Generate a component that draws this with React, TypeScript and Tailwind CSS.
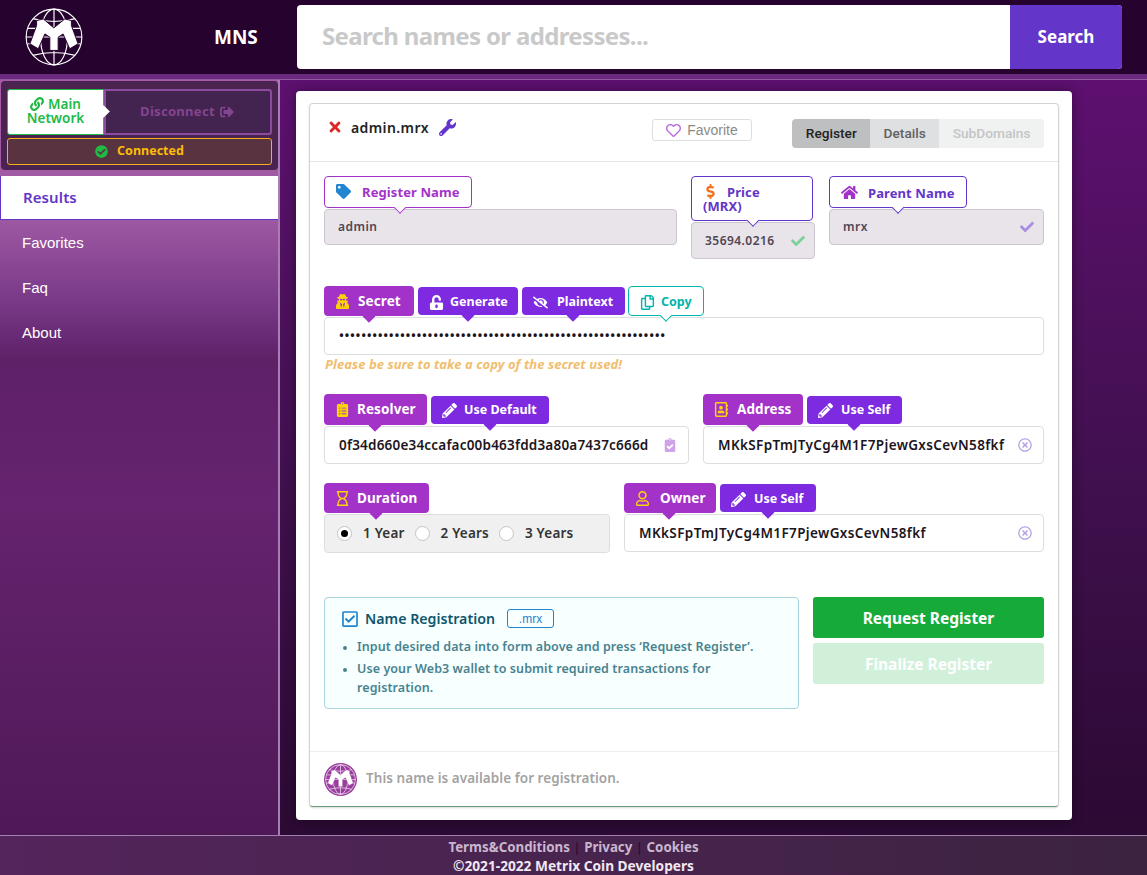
import React from "react";
import {
  FaCheck,
  FaCheckCircle,
  FaClipboardCheck,
  FaClipboardList,
  FaDollarSign,
  FaEyeSlash,
  FaHome,
  FaLink,
  FaPencilAlt,
  FaRegAddressBook,
  FaRegCheckSquare,
  FaRegCopy,
  FaRegHeart,
  FaRegHourglass,
  FaRegTimesCircle,
  FaRegUser,
  FaSignOutAlt,
  FaTag,
  FaTimes,
  FaUnlockAlt,
  FaUserSecret,
  FaWrench,
} from "react-icons/fa";

const ui = "font-['Noto_Sans',sans-serif]";
const arial = "font-['Liberation_Sans',Arial,sans-serif]";

const Logo = ({ size, color, bg }: { size: number; color: string; bg: string }) => (
  <svg width={size} height={size} viewBox="0 0 60 60" fill="none">
    <g stroke={color} strokeWidth="1.2">
      <circle cx="30" cy="30" r="28.8" />
      <ellipse cx="30" cy="30" rx="14" ry="28.8" />
      <path d="M30 1.2V58.8M1.2 30H58.8M8 11Q30 17 52 11M8 49Q30 43 52 49M3 21H14V37H3M57 21H46V37H57" />
    </g>
    <path
      d="M12 13L18.9 11.3L29.8 20.6L41.2 11.3L48 13V18.2L54.9 37L46.3 42.2L39.4 26.8L34.3 30.2V43.9H25.7V30.2L20.6 26.8L13.7 42.2L5.1 37L12 18.2Z"
      fill={color}
      stroke={bg}
      strokeWidth="1"
    />
  </svg>
);

const Caret = ({ className, left }: { className: string; left: string }) => (
  <span className={`absolute bottom-[-5px] h-[9px] w-[9px] -translate-x-1/2 rotate-45 ${left} ${className}`} />
);

type TagProps = {
  icon: React.ReactNode;
  text: string;
  width: string;
  caret: string;
  gap: string;
  tone?: "magenta" | "violet" | "teal";
  height?: string;
};

// solid pointing labels above the inputs
const Tag = ({ icon, text, width, caret, gap, tone = "magenta", height = "h-[28px]" }: TagProps) => {
  const toneClass =
    tone === "magenta"
      ? "bg-[#a333c8] text-white text-[13.5px] tracking-[0.1px]"
      : tone === "violet"
        ? "bg-[#7d2ae0] text-white text-[12.5px] pt-[2px]"
        : "bg-white border border-[#00b5ad] text-[#00b5ad] text-[12.5px] pt-[2px]";
  const caretClass =
    tone === "magenta"
      ? "bg-[#a333c8]"
      : tone === "violet"
        ? "bg-[#7d2ae0]"
        : "bg-white border-r border-b border-[#00b5ad]";
  return (
    <div className={`relative z-10 flex items-center rounded-[4px] pl-[11px] font-bold ${gap} ${height} ${width} ${toneClass}`}>
      <span className="flex w-[15px] justify-center text-[15px]">{icon}</span>
      <span>{text}</span>
      <Caret className={caretClass} left={caret} />
    </div>
  );
};

// white outlined labels on the first row
const OutlineTag = ({
  icon,
  text,
  width,
  height,
  color,
  caret,
  border,
}: {
  icon: React.ReactNode;
  text: React.ReactNode;
  width: string;
  height: string;
  color: string;
  caret: string;
  border: string;
}) => (
  <div
    className={`relative z-10 rounded-[4px] border bg-white pl-[11px] pr-2 pt-[7px] text-[13px] font-bold leading-[14px] tracking-[0.1px] ${height} ${width} ${color} ${border}`}
  >
    {icon}
    {text}
    <Caret className={`border-r border-b bg-white ${border}`} left={caret} />
  </div>
);

const ReadOnly = ({ value, check, height = "h-[36px]" }: { value: string; check?: string; height?: string }) => (
  <div
    className={`flex items-center justify-between rounded-[4px] border border-[#cbc6cf] bg-[#e9e3ea] pl-[13px] pr-[9px] text-[12px] font-semibold tracking-[0.45px] text-[#4f4753] ${height}`}
  >
    <span>{value}</span>
    {check && <FaCheck className={`text-[14px] ${check}`} />}
  </div>
);

const Field = ({ children, className }: { children: React.ReactNode; className?: string }) => (
  <div
    className={`flex h-[38px] items-center justify-between rounded-[4px] border border-[#dededf] bg-white pl-[14px] pr-[11px] text-[13.5px] font-semibold text-[#1c1520] ${className ?? ""}`}
  >
    {children}
  </div>
);

const Radio = ({ label, on }: { label: string; on?: boolean }) => (
  <div className="flex items-center gap-[11px]">
    <span className="flex h-[15px] w-[15px] items-center justify-center rounded-full border border-[#c4c4c4] bg-white">
      {on && <span className="h-[7px] w-[7px] rounded-full bg-black" />}
    </span>
    <span>{label}</span>
  </div>
);

const navItems = ["Favorites", "Faq", "About"];

export default function App() {
  return (
    <div className={`flex h-[875px] w-[1147px] flex-col overflow-hidden bg-[#26022e] ${ui}`}>
      <header className="flex h-[74px] shrink-0 items-center bg-[#26022e]">
        <div className="ml-[25px] w-[58px]">
          <Logo size={58} color="#ffffff" bg="#26022e" />
        </div>
        <div className="ml-[131px] w-[83px] text-[19px] font-bold text-white">MNS</div>
        <div className="flex h-[64px] w-[825px] overflow-hidden rounded-[4px] bg-white">
          <div className="flex flex-1 items-center pb-[2px] pl-[25px] text-[24px] font-bold tracking-[-0.65px] text-[#c9c9c9]">
            Search names or addresses...
          </div>
          <div className="flex w-[112px] items-center justify-center bg-[#6435c9] text-[17px] font-bold text-white">
            Search
          </div>
        </div>
      </header>
      <div className="h-[5px] shrink-0 bg-[#6b2a80]" />

      <div className="flex min-h-0 flex-1 border-t border-[#8f5aa0]">
        <aside className="flex w-[280px] shrink-0 flex-col border-r-2 border-[#a87db5] [background-image:linear-gradient(180deg,#a65aa8_0%,#a05aa4_18%,#7a3a88_29%,#5e2168_37%,#66236f_56%,#4e1956_100%)]">
          <div className="mb-[6px] ml-[1px] mt-[1px] rounded-[4px] bg-[#4a2350] px-[6px] pt-[8px] pb-[5px]">
            <div className="flex h-[46px]">
              <div className="relative flex w-[97px] flex-col items-center justify-center rounded-l-[3px] border border-[#21ba45] bg-white pb-[2px] text-[13.5px] font-semibold leading-[14px] text-[#21ba45]">
                <span className="flex items-center gap-[4px]">
                  <FaLink className="text-[14px]" />
                  Main
                </span>
                <span>Network</span>
                <span className="absolute right-[-5px] top-[17px] h-[9px] w-[9px] rotate-45 bg-white" />
              </div>
              <div className="flex flex-1 items-center justify-center gap-[5px] rounded-r-[3px] border-2 border-[#8a4c9c] bg-[#43234f] pr-[2px] text-[13px] font-bold tracking-[0.3px] text-[#84458f]">
                Disconnect
                <FaSignOutAlt className="text-[14px]" />
              </div>
            </div>
            <div className="mt-[3px] flex h-[27px] items-center justify-center gap-[9px] rounded-[3px] border border-[#f2b21c] bg-[#5a3340] text-[12.5px] font-bold text-[#fbbd08]">
              <FaCheckCircle className="text-[13px] text-[#21ba45]" />
              Connected
            </div>
          </div>
          <div className="mb-[1px] flex h-[44px] items-center border-b border-l border-[#6435c9] bg-white pb-[1px] pl-[22px] text-[15px] font-semibold tracking-[0.1px] text-[#6435c9]">
            Results
          </div>
          {navItems.map((item) => (
            <div key={item} className={`flex h-[45px] items-center pl-[22px] text-[15px] text-white ${arial}`}>
              {item}
            </div>
          ))}
        </aside>

        <main className="min-w-0 flex-1 bg-gradient-to-b from-[#5e1070] via-[#421050] to-[#2b0a33] pl-[16px] pr-[75px] pt-[11px]">
          <div className="h-[729px] rounded-[4px] bg-white px-[13px] pt-[12px] shadow-[0_0_12px_rgba(0,0,0,0.4)]">
            <div className="flex h-[704px] flex-col rounded-[4px] border border-[#d4d4d5] border-b-[#6a9c78] shadow-[0_1px_2px_rgba(0,0,0,0.15)]">
              <div className="flex h-[58px] shrink-0 border-b border-[#e4e4e5] pl-[17px] pr-[14px]">
                <div className="flex h-[46px] w-[325px] items-center">
                  <FaTimes className="text-[16px] text-[#db2828]" />
                  <span className="ml-[8px] text-[14px] font-semibold tracking-[0.4px] text-[#222]">admin.mrx</span>
                  <FaWrench className="ml-[10px] text-[17px] text-[#6435c9]" />
                </div>
                <div
                  className={`mt-[15px] flex h-[22px] w-[101px] items-center justify-center gap-[6px] rounded-[3px] border border-[#dedede] text-[14px] text-[#8a8a8a] ${arial}`}
                >
                  <FaRegHeart className="text-[15px] text-[#b968dc]" />
                  Favorite
                </div>
                <div className="ml-[40px] mt-[15px] flex h-[29px] overflow-hidden rounded-[4px] font-['Roboto',sans-serif] text-[13.7px] font-medium">
                  <div className="flex w-[78px] items-center justify-center bg-[#bebfc0] text-[#222]">Register</div>
                  <div className="flex w-[69px] items-center justify-center bg-[#dfe0e1] text-[#5f6062]">Details</div>
                  <div className="flex w-[105px] items-center justify-center bg-[#f0f1f1] text-[#c4c5c6]">SubDomains</div>
                </div>
              </div>

              <div className="flex-1 px-[14px] pt-[14px]">
                <div className="flex h-[110px] gap-[14px]">
                  <div className="w-[353px]">
                    <OutlineTag
                      width="w-[148px]"
                      height="h-[32px]"
                      color="text-[#a333c8]"
                      border="border-[#a333c8]"
                      caret="left-[75px]"
                      icon={<FaTag className="mr-[11px] inline text-[15px] text-[#2185d0] align-[-2px]" />}
                      text="Register Name"
                    />
                    <div className="mt-[1px]">
                      <ReadOnly value="admin" />
                    </div>
                  </div>
                  <div className="w-[124px]">
                    <OutlineTag
                      width="w-[122px]"
                      height="h-[45px]"
                      color="text-[#6435c9]"
                      border="border-[#6435c9]"
                      caret="left-[61px]"
                      icon={<FaDollarSign className="mr-[9px] inline text-[15px] text-[#f2711c] align-[-2px]" />}
                      text={
                        <>
                          Price
                          <br />
                          (MRX)
                        </>
                      }
                    />
                    <div className="mt-[1px]">
                      <ReadOnly value="35694.0216" check="text-[#7fd19a]" height="h-[37px]" />
                    </div>
                  </div>
                  <div className="flex-1">
                    <OutlineTag
                      width="w-[138px]"
                      height="h-[32px]"
                      color="text-[#6435c9]"
                      border="border-[#6435c9]"
                      caret="left-[68px]"
                      icon={<FaHome className="mr-[10px] inline text-[17px] text-[#a333c8] align-[-3px]" />}
                      text="Parent Name"
                    />
                    <div className="mt-[1px]">
                      <ReadOnly value="mrx" check="text-[#a98fdf]" />
                    </div>
                  </div>
                </div>

                <div className="flex items-center">
                  <Tag width="w-[90px]" height="h-[30px]" gap="gap-[8px]" caret="left-[45px]" icon={<FaUserSecret className="text-[#fbd408]" />} text="Secret" />
                  <div className="ml-[4px]">
                    <Tag width="w-[100px]" gap="gap-[6px]" caret="left-[50px]" tone="violet" icon={<FaUnlockAlt />} text="Generate" />
                  </div>
                  <div className="ml-[4px]">
                    <Tag width="w-[103px]" gap="gap-[9px]" caret="left-[51px]" tone="violet" icon={<FaEyeSlash />} text="Plaintext" />
                  </div>
                  <div className="ml-[3px]">
                    <Tag width="w-[76px]" height="h-[30px]" gap="gap-[6px]" caret="left-[37px]" tone="teal" icon={<FaRegCopy />} text="Copy" />
                  </div>
                </div>
                <Field className="mt-[1px]">
                  <span className="text-[13px] tracking-[0.65px]">{"•".repeat(59)}</span>
                </Field>
                <div className="h-[18px] pl-[1px] text-[13px] font-bold italic leading-[18px] tracking-[0.05px] text-[#f0be6e]">
                  Please be sure to take a copy of the secret used!
                </div>

                <div className="mt-[21px] flex gap-[14px]">
                  <div className="w-[365px]">
                    <div className="flex items-center gap-[4px]">
                      <Tag width="w-[103px]" height="h-[31px]" gap="gap-[7px]" caret="left-[51px]" icon={<FaClipboardList className="text-[#fbd408]" />} text="Resolver" />
                      <Tag width="w-[118px]" gap="gap-[7px]" caret="left-[59px]" tone="violet" icon={<FaPencilAlt />} text="Use Default" />
                    </div>
                    <Field className="mt-[1px] tracking-[0.2px]">
                      <span>0f34d660e34ccafac00b463fdd3a80a7437c666d</span>
                      <FaClipboardCheck className="text-[14px] text-[#d0a3e8]" />
                    </Field>
                  </div>
                  <div className="flex-1">
                    <div className="flex items-center gap-[4px]">
                      <Tag width="w-[100px]" height="h-[31px]" gap="gap-[8px]" caret="left-[50px]" icon={<FaRegAddressBook className="text-[#fbd408]" />} text="Address" />
                      <Tag width="w-[95px]" gap="gap-[8px]" caret="left-[47px]" tone="violet" icon={<FaPencilAlt />} text="Use Self" />
                    </div>
                    <Field className="mt-[1px] tracking-[0.36px]">
                      <span>MKkSFpTmJTyCg4M1F7PjewGxsCevN58fkf</span>
                      <FaRegTimesCircle className="text-[14px] text-[#b3a2e6]" />
                    </Field>
                  </div>
                </div>

                <div className="mt-[19px] flex gap-[14px]">
                  <div className="w-[286px]">
                    <Tag width="w-[105px]" height="h-[30px]" gap="gap-[7px]" caret="left-[52px]" icon={<FaRegHourglass className="text-[#fbd408]" />} text="Duration" />
                    <div className="mt-[1px] flex h-[39px] items-center gap-[10px] rounded-[4px] border border-[#dededf] bg-[#f0f0f0] pl-[12px] text-[13.5px] font-semibold tracking-[0.2px] text-[#333]">
                      <Radio label="1 Year" on />
                      <Radio label="2 Years" />
                      <Radio label="3 Years" />
                    </div>
                  </div>
                  <div className="flex-1">
                    <div className="flex items-center gap-[4px]">
                      <Tag width="w-[92px]" height="h-[30px]" gap="gap-[10px]" caret="left-[45px]" icon={<FaRegUser className="text-[#fbd408]" />} text="Owner" />
                      <Tag width="w-[96px]" gap="gap-[8px]" caret="left-[48px]" tone="violet" icon={<FaPencilAlt />} text="Use Self" />
                    </div>
                    <Field className="mt-[1px] tracking-[0.38px]">
                      <span>MKkSFpTmJTyCg4M1F7PjewGxsCevN58fkf</span>
                      <FaRegTimesCircle className="text-[14px] text-[#b3a2e6]" />
                    </Field>
                  </div>
                </div>

                <div className="mt-[44px] flex gap-[14px]">
                  <div className="h-[112px] w-[475px] rounded-[4px] border border-[#a9d5de] bg-[#f8ffff] pl-[16px] pt-[10px]">
                    <div className="flex items-center">
                      <FaRegCheckSquare className="text-[18px] text-[#2185d0]" />
                      <span className="ml-[6px] text-[14.2px] font-semibold text-[#0e566c]">Name Registration</span>
                      <span className={`ml-[12px] flex h-[19px] w-[47px] items-center justify-center rounded-[3px] border border-[#2185d0] text-[12px] text-[#2185d0] ${arial}`}>
                        .mrx
                      </span>
                    </div>
                    <ul className="mt-[8px] list-disc pl-[16px] pr-[30px] text-[12.5px] font-semibold leading-[19px] tracking-[0.08px] text-[#47838f] marker:text-[10px]">
                      <li className="mb-[3px]">Input desired data into form above and press ‘Request Register’.</li>
                      <li>Use your Web3 wallet to submit required transactions for registration.</li>
                    </ul>
                  </div>
                  <div className="flex-1">
                    <div className="flex h-[41px] items-center justify-center rounded-[3px] bg-[#16ab39] pt-[2px] text-[15.5px] font-bold text-white">
                      Request Register
                    </div>
                    <div className="mt-[5px] flex h-[41px] items-center justify-center rounded-[3px] bg-[#d0f0da] pt-[2px] text-[15.5px] font-bold text-white">
                      Finalize Register
                    </div>
                  </div>
                </div>
              </div>

              <div className="flex h-[55px] shrink-0 items-center border-t border-[#eeeeee] pl-[14px]">
                <div className="flex h-[33px] w-[33px] items-center justify-center rounded-full bg-[#9a3d9e]">
                  <Logo size={31} color="#ffffff" bg="#9a3d9e" />
                </div>
                <span className="ml-[9px] pb-[1px] text-[13.5px] font-semibold tracking-[0.05px] text-[#a3a3a3]">
                  This name is available for registration.
                </span>
              </div>
            </div>
          </div>
        </main>
      </div>

      <footer className="h-[40px] shrink-0 border-t border-[#a37fb0] bg-gradient-to-r from-[#54245c] to-[#3c2340] pt-[2px] text-center text-[13.3px] font-bold leading-[19px]">
        <div className="text-[#c9b6ce]">
          Terms&amp;Conditions <span className="font-normal text-[#2c0733]">|</span> Privacy{" "}
          <span className="font-normal text-[#2c0733]">|</span> Cookies
        </div>
        <div className="text-[13.7px] leading-[18px] text-[#f0e8f2]">©2021-2022 Metrix Coin Developers</div>
      </footer>
    </div>
  );
}
